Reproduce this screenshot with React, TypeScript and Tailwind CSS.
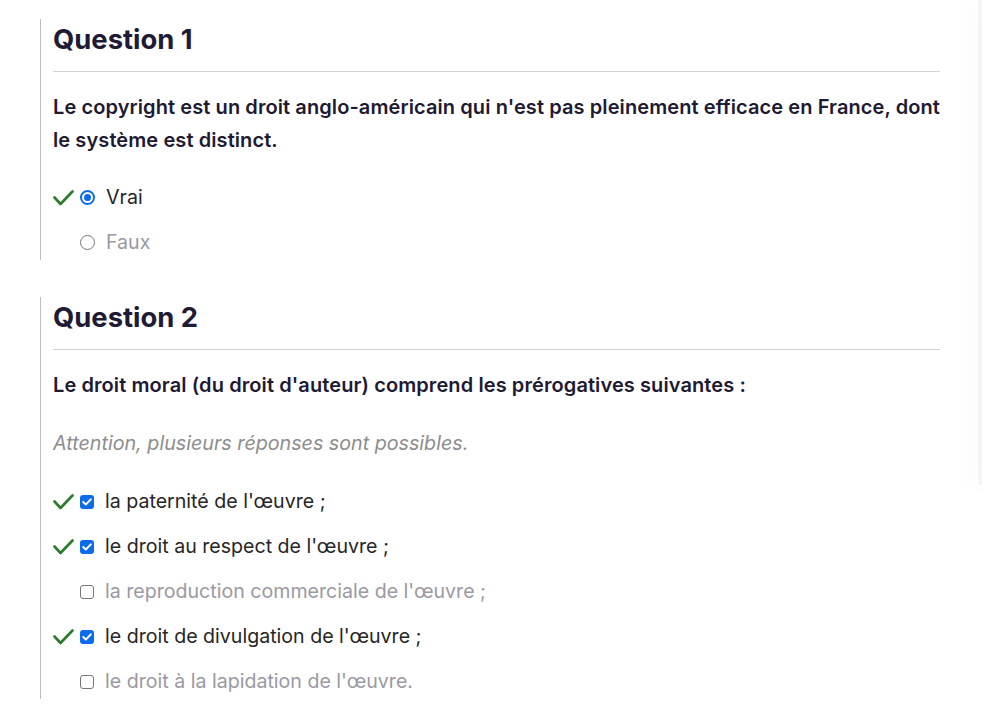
import React from 'react';

type Option = { label: string; checked: boolean; correct: boolean };

type Question = {
  title: string;
  text: string;
  note?: string;
  kind: 'radio' | 'checkbox';
  options: Option[];
};

const questions: Question[] = [
  {
    title: 'Question 1',
    text: "Le copyright est un droit anglo-américain qui n'est pas pleinement efficace en France, dont le système est distinct.",
    kind: 'radio',
    options: [
      { label: 'Vrai', checked: true, correct: true },
      { label: 'Faux', checked: false, correct: false },
    ],
  },
  {
    title: 'Question 2',
    text: "Le droit moral (du droit d'auteur) comprend les prérogatives suivantes :",
    note: 'Attention, plusieurs réponses sont possibles.',
    kind: 'checkbox',
    options: [
      { label: "la paternité de l'œuvre ;", checked: true, correct: true },
      { label: "le droit au respect de l'œuvre ;", checked: true, correct: true },
      { label: "la reproduction commerciale de l'œuvre ;", checked: false, correct: false },
      { label: "le droit de divulgation de l'œuvre ;", checked: true, correct: true },
      { label: "le droit à la lapidation de l'œuvre.", checked: false, correct: false },
    ],
  },
];

const CorrectMark = () => (
  <svg width="21" height="16" viewBox="0 0 21 16" fill="none">
    <path d="M1.5 7.5 L7.5 14 L19.5 1.5" stroke="#2c7a2c" strokeWidth="2.6" strokeLinecap="round" strokeLinejoin="round" />
  </svg>
);

const Radio = ({ checked }: { checked: boolean }) =>
  checked ? (
    <span className="flex h-[15px] w-[15px] items-center justify-center rounded-full border-2 border-[#0b6bea]">
      <span className="h-[7px] w-[7px] rounded-full bg-[#0b6bea]" />
    </span>
  ) : (
    <span className="h-[15px] w-[15px] rounded-full border-[1.5px] border-[#767676]" />
  );

const Checkbox = ({ checked }: { checked: boolean }) =>
  checked ? (
    <span className="flex h-[14px] w-[14px] items-center justify-center rounded-[3px] bg-[#0b6bea]">
      <svg width="10" height="8" viewBox="0 0 10 8" fill="none">
        <path d="M1.2 4 L3.8 6.5 L8.8 1.3" stroke="white" strokeWidth="1.9" strokeLinecap="round" strokeLinejoin="round" />
      </svg>
    </span>
  ) : (
    <span className="h-[14px] w-[14px] rounded-[3px] border-[1.5px] border-[#767676]" />
  );

const QuestionBlock = ({ q }: { q: Question }) => (
  <section className="w-[900px] border-l border-[#bdbdbd] pl-3 pb-[4px]">
    <h2 className="text-[27.4px] font-bold leading-[40px] text-[#211a35]">{q.title}</h2>
    <hr className="mt-3 border-t border-[#d3d3d3]" />
    <p className="mt-[19px] text-[20px] font-semibold leading-[33px] tracking-[0.09px] text-[#1e1a33]">
      {q.text}
    </p>
    {q.note && (
      <p className="mt-[28px] text-[19.7px] italic leading-[27px] text-[#8d8d8d]">{q.note}</p>
    )}
    <div className={`${q.note ? 'mt-[31px]' : 'mt-[27px]'} flex flex-col gap-[18px]`}>
      {q.options.map((o) => (
        <div key={o.label} className="flex h-[27px] items-center">
          <div className="w-[27px]">{o.correct && <CorrectMark />}</div>
          {q.kind === 'radio' ? <Radio checked={o.checked} /> : <Checkbox checked={o.checked} />}
          <span
            className={`ml-[11px] text-[19.6px] leading-[27px] ${
              o.checked ? 'text-[#262626]' : 'text-[#9a99a3]'
            }`}
          >
            {o.label}
          </span>
        </div>
      ))}
    </div>
  </section>
);

const App: React.FC = () => {
  return (
    <div className="relative min-h-screen overflow-hidden bg-white font-['Inter',sans-serif]">
      <main className="flex flex-col gap-[37px] pl-10 pt-[19px]">
        {questions.map((q) => (
          <QuestionBlock key={q.title} q={q} />
        ))}
      </main>

      {/* side panel peeking in on the right */}
      <div className="absolute right-0 top-0 h-[485px] w-[4px] rounded-bl-md bg-[#f4f4f4] shadow-[0_0_28px_rgba(0,0,0,0.10)]" />
    </div>
  );
};

export default App;
